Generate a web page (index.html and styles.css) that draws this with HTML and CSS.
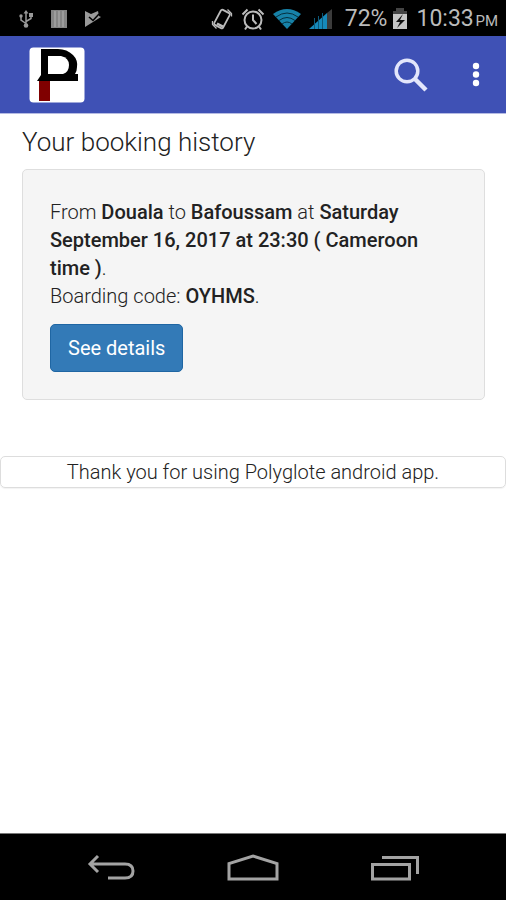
FILE: index.html
```html
<!DOCTYPE html>
<html lang="en">
<head>
<meta charset="utf-8">
<meta name="viewport" content="width=device-width, initial-scale=1">
<title>Your booking history</title>
<link rel="stylesheet" href="styles.css">
</head>
<body>
<div class="status">
  <div class="status-left">
    <svg width="16" height="20" viewBox="0 0 16 20" fill="none" stroke="#999" stroke-width="1.5" aria-hidden="true"><path d="M8 3v13M8 14.500L3 11V7M8 12.500L13 9.500V6"/><path d="M5.500 4.500L8 1l2.500 3.500z" fill="#999" stroke="none"/><circle cx="8" cy="16.500" r="2.300" fill="#999" stroke="none"/><circle cx="3" cy="7" r="1.700" fill="#999" stroke="none"/><path d="M11 4h4v4h-4z" fill="#999" stroke="none"/></svg>
    <svg width="16" height="20" viewBox="0 0 16 20" aria-hidden="true"><path d="M0 1h16v18H0z" fill="#858585"/><path d="M4 2v16M8 2v16M12 2v16" stroke="#a4a4a4" stroke-width="1.500"/></svg>
    <svg width="18" height="20" viewBox="0 0 18 20" aria-hidden="true"><path d="M1 2l6 3 7-3 1 5 2 1-16 10z" fill="#999"/><path d="M5 8l4 3.500 6-6.500" fill="none" stroke="#000" stroke-width="1.600"/></svg>
  </div>
  <div class="status-right">
    <svg width="22" height="24" viewBox="0 0 22 24" fill="none" stroke="#bbb" aria-hidden="true"><rect x="6" y="3.500" width="10" height="17" rx="1.500" transform="rotate(28 11 12)" stroke-width="1.800"/><path d="M6 16.500l6 3.200" stroke-width="2.500"/><path d="M1.500 14v3.500l4 4M20.500 9.500V6.500l-4-4" stroke-width="1.300"/></svg>
    <svg width="24" height="24" viewBox="0 0 24 24" fill="none" stroke="#bbb" stroke-width="2" aria-hidden="true"><circle cx="12" cy="13" r="8.500"/><path d="M12 7.500V13l3.500 4M1.500 7.500l5-5M22.500 7.500l-5-5M6 19.500l-2 3M18 19.500l2 3"/></svg>
    <svg width="28" height="22" viewBox="0 0 28 22" aria-hidden="true"><path d="M0 6Q14-4 28 6L14 21z" fill="#1782a8"/><path d="M3 9q11-8 22 0M6 12.500q8-6 16 0M9 16q5-4 10 0" fill="none" stroke="#05303f" stroke-width="1"/></svg>
    <svg width="24" height="22" viewBox="0 0 24 22" aria-hidden="true"><path d="M0 21L18 5v16z" fill="#1689ba"/><path d="M18 5l5-4v20h-5z" fill="#3b3b3b"/><path d="M5.500 10v11M9.500 8v13M13.500 5v16" stroke="#0d5878" stroke-width="1"/></svg>
    <span class="battery-text">72%</span>
    <svg width="16" height="22" viewBox="0 0 16 22" aria-hidden="true"><path d="M4 0h8v3h3v5H1V3h3z" fill="#444"/><path d="M1 6h14v15H1z" fill="#c5c5c5"/><path d="M11 6l-7 8h4l-3 6 8-8H8z" fill="#111"/></svg>
    <span class="clock">10:33 <small>PM</small></span>
  </div>
</div>
<header class="appbar">
  <svg class="logo" width="56" height="56" viewBox="0 0 56 56" role="img" aria-label="Polyglote"><rect x="0.500" y="0.500" width="55" height="55" rx="4" fill="#fff"/><path d="M12 2H29Q38 2 44 8Q49 13 48 20Q48 24 46 27H49V34H8L12 28z" fill="#000"/><path d="M19 9H32Q40 11 40 18Q40 25 34 27H19z" fill="#fff"/><path d="M10 34h11v20H10z" fill="#800000"/></svg>
  <div class="actions">
    <button type="button" class="icon-button" aria-label="Search"><svg width="36" height="36" viewBox="0 0 36 36" fill="none" stroke="#e3e6fb" aria-hidden="true"><circle cx="14" cy="14" r="10.800" stroke-width="3.500"/><path d="M22 22l11 11" stroke-width="4.500"/></svg></button>
    <button type="button" class="icon-button" aria-label="More options"><svg width="8" height="26" viewBox="0 0 8 26" fill="#fff" aria-hidden="true"><circle cx="4" cy="4" r="3.200"/><circle cx="4" cy="12.500" r="3.200"/><circle cx="4" cy="21" r="3.200"/></svg></button>
  </div>
</header>
<main class="content">
  <section class="history">
    <h1>Your booking history</h1>
    <article class="well">
      <p>From <b>Douala</b> to <b>Bafoussam</b> at <b>Saturday September 16, 2017 at 23:30 ( Cameroon time )</b>.<br>Boarding code: <b>OYHMS</b>.</p>
      <button type="button" class="primary">See details</button>
    </article>
  </section>
  <footer class="thanks">Thank you for using Polyglote android app.</footer>
</main>
<nav class="navbar" aria-label="System">
  <button type="button" class="icon-button" aria-label="Back"><svg width="48" height="28" viewBox="0 0 48 28" fill="none" stroke="#a3a3a3" stroke-width="3" aria-hidden="true"><path d="M3 10H38Q46 10 46 17T38 24H21M11 2L3 10l8 8"/></svg></button>
  <button type="button" class="icon-button" aria-label="Home"><svg width="54" height="28" viewBox="0 0 54 28" fill="none" stroke="#a3a3a3" stroke-width="3" aria-hidden="true"><path d="M3 25V9.500L27 2l24 7.500V25z"/></svg></button>
  <button type="button" class="icon-button" aria-label="Recent apps"><svg width="50" height="28" viewBox="0 0 50 28" fill="none" stroke="#a3a3a3" stroke-width="3" aria-hidden="true"><path d="M2.500 10.500h37V25h-37zM12 3.500h35.500V20"/></svg></button>
</nav>
</body>
</html>
```
FILE: styles.css
```css
* {
  box-sizing: border-box;
}

body {
  margin: 0;
  min-height: 100vh;
  display: flex;
  flex-direction: column;
  background: #fff;
  color: #222;
  font: 20px/28px Roboto, "Liberation Sans", sans-serif;
}

svg {
  display: block;
}

button {
  font: inherit;
  cursor: pointer;
}

.status {
  display: flex;
  justify-content: space-between;
  align-items: center;
  padding: 5px 8px 3px 18px;
  background: #000;
  color: #bbb;
  font-size: 23px;
  line-height: 28px;
}

.status-left {
  display: flex;
  align-items: center;
  gap: 17px;
}

.status-right {
  display: flex;
  align-items: center;
  gap: 8px;
}

.battery-text {
  margin: 0 -3px 0 4px;
}

.clock small {
  margin-left: -4px;
  font-size: 15px;
  line-height: 16px;
}

.appbar {
  display: flex;
  justify-content: space-between;
  align-items: center;
  padding: 11px 26px 10px 29px;
  border-bottom: 1px solid #b5bbe3;
  background: #3f51b5;
}

.actions {
  display: flex;
  align-items: center;
  gap: 43px;
}

.icon-button {
  padding: 0;
  border: 0;
  background: none;
}

.content {
  flex: 1;
}

.history {
  padding: 12px 21px 56px 22px;
}

h1 {
  margin: 0 0 11px;
  font-size: 26px;
  line-height: 32px;
  font-weight: 300;
}

.well {
  padding: 28px 27px 27px;
  border: 1px solid #dedede;
  border-radius: 5px;
  background: #f5f5f5;
  font-weight: 300;
}

.well p {
  margin: 0 0 14px;
}

.well b {
  font-weight: 500;
}

.primary {
  display: block;
  padding: 9px 17px;
  border: 1px solid #1f66a3;
  border-radius: 5px;
  background: #337ab7;
  color: #fff;
  font-weight: 400;
}

.thanks {
  padding: 1px 16px;
  border: 1px solid #ddd;
  border-radius: 5px;
  box-shadow: 0 1px 1px rgba(0, 0, 0, 0.05);
  font-weight: 300;
  text-align: center;
}

.navbar {
  display: grid;
  grid-template-columns: 1fr 1fr 1fr;
  justify-items: center;
  padding: 20px 40px 18px;
  border-top: 1px solid #777;
  background: #000;
}
```
